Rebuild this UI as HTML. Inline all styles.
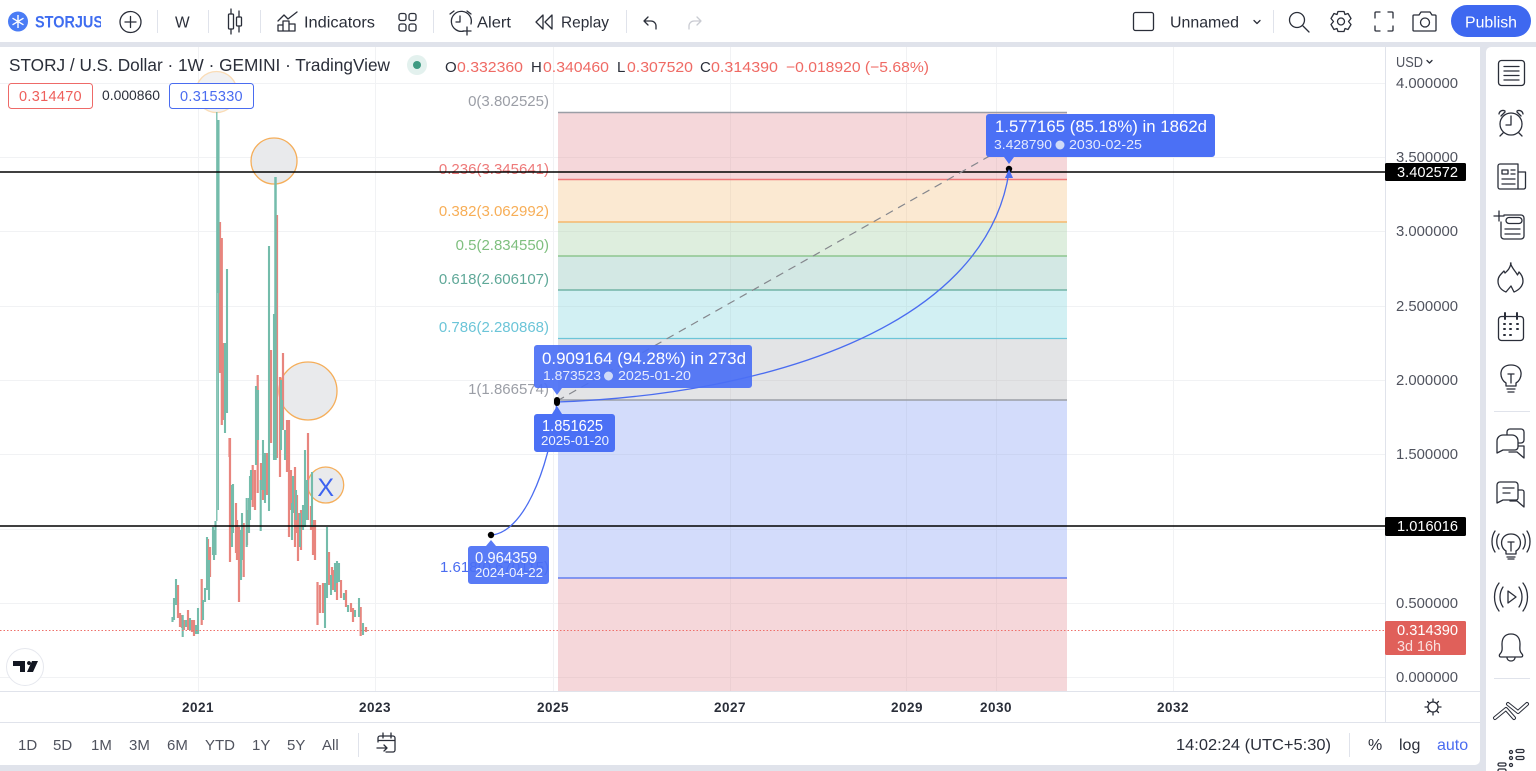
<!DOCTYPE html>
<html><head><meta charset="utf-8"><title>STORJ chart</title>
<style>
html,body{margin:0;padding:0;width:1536px;height:771px;overflow:hidden;background:#e0e3eb}
svg.root{display:block;position:absolute;left:0;top:0;filter:blur(.35px)}
text{font-family:"Liberation Sans",sans-serif;fill:#2a2e39}
.i{fill:none;stroke:#2a2e39;stroke-width:1.3;stroke-linecap:round;stroke-linejoin:round}
.ax{font-size:14.5px;fill:#50535e}
.fl{font-size:15px;text-anchor:end}
.t{font-size:16px}
.b{font-size:15px;fill:#50535e}
.y{font-size:13.5px;font-weight:bold;text-anchor:middle;letter-spacing:.5px}
.tt{fill:#fff}
</style></head><body>
<svg class="root" width="1536" height="771" viewBox="0 0 1536 771" xmlns="http://www.w3.org/2000/svg">
<!-- panes -->
<rect x="0" y="0" width="1536" height="42" fill="#fff"/>
<rect x="-6" y="47" width="1486" height="718" rx="5" fill="#fff"/>
<rect x="1486" y="47" width="60" height="730" rx="5" fill="#fff"/>
<!-- grid -->
<path d="M0 83.5H1385M0 157.5H1385M0 231.5H1385M0 306.5H1385M0 380.5H1385M0 454.5H1385M0 529.5H1385M0 603.5H1385M0 677.5H1385M198.5 47V691M375.5 47V691M553.5 47V691M730.5 47V691M906.5 47V691M996.5 47V691M1173.5 47V691" stroke="#f1f2f4" stroke-width="1" fill="none"/>
<!-- fib fills -->
<rect x="558" y="112" width="509" height="68" fill="#f5d7da"/>
<rect x="558" y="180" width="509" height="42" fill="#fbe9d2"/>
<rect x="558" y="222" width="509" height="34" fill="#deeede"/>
<rect x="558" y="256" width="509" height="34" fill="#d3e8e4"/>
<rect x="558" y="290" width="509" height="48" fill="#d2f0f3"/>
<rect x="558" y="338" width="509" height="62" fill="#e3e4e6"/>
<rect x="558" y="400" width="509" height="178" fill="#d3dcfb"/>
<rect x="558" y="578" width="509" height="113" fill="#f5d7da"/>
<path d="M730.500 112V691M906.500 112V691M996.500 112V691M558 157.500H1067M558 231.500H1067M558 306.500H1067M558 380.500H1067M558 454.500H1067M558 529.500H1067M558 603.500H1067M558 677.500H1067" stroke="#000" stroke-opacity=".035"/>
<path d="M558 112.500H1067" stroke="#9b9ea6" stroke-width="1.400"/>
<path d="M558 179.500H1067" stroke="#ee7a7a" stroke-width="1.500"/>
<path d="M558 222H1067" stroke="#f7ae57" stroke-width="1.300"/>
<path d="M558 256H1067" stroke="#7fbf7f" stroke-width="1.300"/>
<path d="M558 290H1067" stroke="#5fa898" stroke-width="1.300"/>
<path d="M558 338.500H1067" stroke="#6cc5d8" stroke-width="1.300"/>
<path d="M558 400H1067" stroke="#9b9ea6" stroke-width="1.400"/>
<path d="M558 578H1067" stroke="#4a6cf0" stroke-width="1.300"/>
<text class="fl" x="549" y="106" style="fill:#9b9ea6">0(3.802525)</text>
<text class="fl" x="549" y="174" style="fill:#ee7a7a">0.236(3.345641)</text>
<text class="fl" x="549" y="216" style="fill:#f7ae57">0.382(3.062992)</text>
<text class="fl" x="549" y="250" style="fill:#7fbf7f">0.5(2.834550)</text>
<text class="fl" x="549" y="284" style="fill:#5fa898">0.618(2.606107)</text>
<text class="fl" x="549" y="332" style="fill:#6cc5d8">0.786(2.280868)</text>
<text class="fl" x="549" y="394" style="fill:#9b9ea6">1(1.866574)</text>
<text class="fl" x="549" y="572" style="fill:#4a6cf0">1.618(0.670115)</text>
<!-- circles -->
<g fill="#e9eaec" stroke="#f5ae5a" stroke-width="1.300">
<circle cx="216.500" cy="92" r="20.500" fill="#f1f1f2" stroke="#fadcb6"/>
<circle cx="274" cy="161" r="23"/>
<circle cx="308" cy="391" r="29"/>
<circle cx="325.700" cy="485" r="18"/>
</g>
<text x="325.700" y="496" text-anchor="middle" style="font-size:25px;fill:#3d63f0">X</text>
<!-- candles -->
<path fill="none" stroke="#e8857e" stroke-width="2.200" d="M178 585V618M180 613V627M182 615V628M184 620V630M188 610V630M192 620V632M194 620V636M201.700 579V625M208 539V573M210 547V577M220 222V373M221.800 238V425M223.500 343V420M229.500 438V457M230 438V562M236 503V553M237 520V560M239 527V602M243.700 523V577M247 510V545M252.700 465V507M255 470V510M257.700 375V493M261 463V490M263 470V500M267 453V495M271 350V443M277 215V458M280 377V477M283 353V430M287 420V472M289 420V537M291 470V510M295 467V547M297 495V533M298 513V561M301 510V550M306 490V520M308 433V520M311 506V530M313 520V555M315 520V560M317.500 582V625M320 585V613M323 583V613M329 552V585M332 567V590M334 570V590M337 580V600M341 580V598M346 590V607M351 603V612M353 608V622M360.700 607V636M366 627V632"/>
<path fill="none" stroke="#74bcab" stroke-width="2.100" d="M172.500 617V622M174 598V620M176 579V605M182.700 615V637M186 620V627M190 618V630M196 625V634M198 608V634M203 600V620M205 588V602M207 537V590M209 560V600M213 527V555M214 530V560M215.500 521V555M225 343V433M227 269V413M232 485V547M233 484V533M241 530V580M242 513V560M246.700 498V547M249 498V533M250 476V520M251 470V500M256 386V465M258 390V440M260.700 480V531M263 440V490M265 453V503M269 246V511M274 314V460M281 380V450M282 400V430M285 430V460M292 503V540M293 476V513M296 490V520M300 513V547M303 505V530M305 450V527M307 480V520M312 472V527M325 583V628M327 527V598M331 575V595M335 563V592M337 561V583M339 563V582M344 593V600M348 605V612M355 610V617M359 598V617M363 623V635M368 630V631"/>
<path fill="none" stroke="#74bcab" stroke-width="1.300" d="M216.800 112V521M218.300 293V510"/>
<path fill="none" stroke="#74bcab" stroke-width="2.500" d="M218.300 120V293M275.500 177V460"/>
<!-- last price line -->
<path d="M0 630.500H1385" stroke="#ee6f6a" stroke-width="1" stroke-dasharray="1.500 2"/>
<!-- horizontal lines -->
<path d="M0 172H1385M0 526H1385" stroke="#000" stroke-width="1.400"/>
<!-- projection -->
<path d="M557 401L1009 145" stroke="#85878d" stroke-width="1.200" stroke-dasharray="8 6" fill="none"/>
<path d="M491 535C522 533 548 475 557 402" stroke="#4a6cf0" stroke-width="1.300" fill="none"/>
<path d="M557 402C760 395 985 330 1009 172" stroke="#4a6cf0" stroke-width="1.300" fill="none"/>
<circle cx="491" cy="535" r="3.200" fill="#000"/>
<rect x="554" y="397" width="6" height="9" rx="3" fill="#000"/>
<circle cx="1009" cy="169" r="3.200" fill="#000"/>
<path d="M1005 178L1009 169L1013 178Z" fill="#4a6cf0"/>
<!-- tooltips -->
<g fill="#4b70f5">
<path d="M537 345H749a3 3 0 0 1 3 3V385a3 3 0 0 1-3 3H562L557 395L552 388H537a3 3 0 0 1-3-3V348a3 3 0 0 1 3-3Z" fill-opacity=".92"/>
<path d="M537 414H552L557 406L562 414H612a3 3 0 0 1 3 3V449a3 3 0 0 1-3 3H537a3 3 0 0 1-3-3V417a3 3 0 0 1 3-3Z"/>
<path d="M471 546H486L491 540L496 546H546a3 3 0 0 1 3 3V581a3 3 0 0 1-3 3H471a3 3 0 0 1-3-3V549a3 3 0 0 1 3-3Z" fill-opacity=".92"/>
<path d="M989 114H1212a3 3 0 0 1 3 3V154a3 3 0 0 1-3 3H1014L1009 164L1004 157H989a3 3 0 0 1-3-3V117a3 3 0 0 1 3-3Z"/>
</g>
<text class="tt" x="542" y="364" textLength="204" lengthAdjust="spacingAndGlyphs" style="font-size:16.500px">0.909164 (94.28%) in 273d</text>
<text class="tt" x="543" y="380" textLength="58" lengthAdjust="spacingAndGlyphs" style="font-size:13px;fill-opacity:.85">1.873523</text>
<circle cx="608.500" cy="376" r="4.500" fill="#d0daf8"/>
<text class="tt" x="618" y="380" textLength="73" lengthAdjust="spacingAndGlyphs" style="font-size:13px;fill-opacity:.85">2025-01-20</text>
<text class="tt" x="542" y="431" textLength="61" lengthAdjust="spacingAndGlyphs" style="font-size:16px">1.851625</text>
<text class="tt" x="541" y="445" textLength="68" lengthAdjust="spacingAndGlyphs" style="font-size:13px;fill-opacity:.9">2025-01-20</text>
<text class="tt" x="475" y="563" textLength="62" lengthAdjust="spacingAndGlyphs" style="font-size:16px;fill-opacity:.95">0.964359</text>
<text class="tt" x="475" y="577" textLength="68" lengthAdjust="spacingAndGlyphs" style="font-size:13px;fill-opacity:.9">2024-04-22</text>
<text class="tt" x="995" y="132" textLength="212" lengthAdjust="spacingAndGlyphs" style="font-size:16.500px">1.577165 (85.18%) in 1862d</text>
<text class="tt" x="994" y="149" textLength="58" lengthAdjust="spacingAndGlyphs" style="font-size:13px;fill-opacity:.85">3.428790</text>
<circle cx="1060" cy="145" r="4.500" fill="#d0daf8"/>
<text class="tt" x="1069" y="149" textLength="73" lengthAdjust="spacingAndGlyphs" style="font-size:13px;fill-opacity:.85">2030-02-25</text>
<!-- legend -->
<text x="9" y="71" textLength="381" lengthAdjust="spacingAndGlyphs" style="font-size:17.500px">STORJ / U.S. Dollar · 1W · GEMINI · TradingView</text>
<circle cx="417" cy="65" r="10" fill="#e3f1ee"/><circle cx="417" cy="65" r="4" fill="#3f9a82"/>
<g style="font-size:15px">
<text x="445" y="72">O</text><text x="457" y="72" textLength="66" lengthAdjust="spacingAndGlyphs" style="fill:#ef6a64">0.332360</text>
<text x="531" y="72">H</text><text x="543" y="72" textLength="66" lengthAdjust="spacingAndGlyphs" style="fill:#ef6a64">0.340460</text>
<text x="617" y="72">L</text><text x="627" y="72" textLength="66" lengthAdjust="spacingAndGlyphs" style="fill:#ef6a64">0.307520</text>
<text x="700" y="72">C</text><text x="711" y="72" textLength="67" lengthAdjust="spacingAndGlyphs" style="fill:#ef6a64">0.314390</text>
<text x="786" y="72" textLength="143" lengthAdjust="spacingAndGlyphs" style="fill:#ef6a64">−0.018920 (−5.68%)</text>
</g>
<rect x="8.500" y="83.500" width="84" height="25" rx="3" fill="#fff" stroke="#ee6a68"/>
<text x="50.500" y="101" text-anchor="middle" style="font-size:14.500px;fill:#ee5f5b;letter-spacing:.3px">0.314470</text>
<text x="102" y="100" textLength="58" lengthAdjust="spacingAndGlyphs" style="font-size:13.500px">0.000860</text>
<rect x="169.500" y="83.500" width="84" height="25" rx="3" fill="#fff" stroke="#4a6cf0"/>
<text x="211.500" y="101" text-anchor="middle" style="font-size:14.500px;fill:#4a6cf0;letter-spacing:.3px">0.315330</text>
<!-- price axis -->
<rect x="1385" y="47" width="95" height="644" fill="#fff"/>
<path d="M1385.500 47V722M0 691.500H1480M0 722.500H1480" stroke="#e0e3eb"/>
<text x="1396" y="67" textLength="27" lengthAdjust="spacingAndGlyphs" style="font-size:14.500px;fill:#50535e">USD</text>
<path d="M1427 60.500l2.500 2.500 2.500-2.500" class="i"/>
<text class="ax" x="1396" y="88" textLength="62" lengthAdjust="spacingAndGlyphs">4.000000</text>
<text class="ax" x="1396" y="162" textLength="62" lengthAdjust="spacingAndGlyphs">3.500000</text>
<text class="ax" x="1396" y="236" textLength="62" lengthAdjust="spacingAndGlyphs">3.000000</text>
<text class="ax" x="1396" y="311" textLength="62" lengthAdjust="spacingAndGlyphs">2.500000</text>
<text class="ax" x="1396" y="385" textLength="62" lengthAdjust="spacingAndGlyphs">2.000000</text>
<text class="ax" x="1396" y="459" textLength="62" lengthAdjust="spacingAndGlyphs">1.500000</text>
<text class="ax" x="1396" y="608" textLength="62" lengthAdjust="spacingAndGlyphs">0.500000</text>
<text class="ax" x="1396" y="682" textLength="62" lengthAdjust="spacingAndGlyphs">0.000000</text>
<rect x="1385" y="163" width="81" height="18" rx="1.500" fill="#000"/>
<text x="1397" y="177" textLength="61" lengthAdjust="spacingAndGlyphs" style="font-size:14.500px;fill:#fff">3.402572</text>
<rect x="1385" y="517" width="81" height="19" rx="1.500" fill="#000"/>
<text x="1397" y="531" textLength="61" lengthAdjust="spacingAndGlyphs" style="font-size:14.500px;fill:#fff">1.016016</text>
<rect x="1385" y="621" width="81" height="34" rx="1.500" fill="#e0605a"/>
<text x="1397" y="635" textLength="61" lengthAdjust="spacingAndGlyphs" style="font-size:14.500px;fill:#fff">0.314390</text>
<text x="1397" y="651" textLength="44" lengthAdjust="spacingAndGlyphs" style="font-size:14.500px;fill:#fff;fill-opacity:.8">3d 16h</text>
<!-- axis gear -->
<g class="i"><circle cx="1433" cy="707" r="5"/><path d="M1433 699v3M1433 712v3M1425 707h3M1438 707h3M1427.500 701.500l2 2M1436.500 710.500l2 2M1427.500 712.500l2-2M1436.500 703.500l2-2"/></g>
<!-- time axis -->
<text class="y" x="198" y="712">2021</text><text class="y" x="375" y="712">2023</text><text class="y" x="553" y="712">2025</text><text class="y" x="730" y="712">2027</text><text class="y" x="907" y="712">2029</text><text class="y" x="996" y="712">2030</text><text class="y" x="1173" y="712">2032</text>
<!-- TV logo -->
<circle cx="25" cy="667" r="18.500" fill="#fff" stroke="#e6e8ee"/>
<path d="M13 661H25V672H20V666H13ZM27 663a2 2 0 1 1 0 .1ZM32 661H38L33 672H27Z" fill="#131722"/>
<!-- bottom bar -->
<text class="b" x="18" y="750">1D</text><text class="b" x="53" y="750">5D</text><text class="b" x="91" y="750">1M</text><text class="b" x="129" y="750">3M</text><text class="b" x="167" y="750">6M</text><text class="b" x="205" y="750">YTD</text><text class="b" x="252" y="750">1Y</text><text class="b" x="287" y="750">5Y</text><text class="b" x="322" y="750">All</text>
<path d="M358.500 733V757M1349.500 733V757" stroke="#e0e3eb"/>
<g class="i"><path d="M378 742V738a2 2 0 0 1 2-2h13a2 2 0 0 1 2 2v12a2 2 0 0 1-2 2h-7M378 740.500h17M383 733v5M391 733v5M377 748h10M384 745l3 3-3 3"/></g>
<text x="1176" y="750" textLength="155" lengthAdjust="spacingAndGlyphs" style="font-size:16px">14:02:24 (UTC+5:30)</text>
<text x="1368" y="750" style="font-size:16px">%</text>
<text x="1399" y="750" style="font-size:16px">log</text>
<text x="1437" y="750" style="font-size:16px;fill:#4a6cf0">auto</text>
<!-- top toolbar -->
<circle cx="18" cy="21.500" r="10" fill="#4a7cf5"/>
<path d="M18 15v13M12.500 18.200l11 6.600M12.500 24.800l11-6.600" stroke="#fff" stroke-width="1.400"/>
<svg x="35" y="8" width="66" height="28" viewBox="0 0 66 28"><text x="0" y="19.500" textLength="68" lengthAdjust="spacingAndGlyphs" style="font-size:17px;font-weight:bold;fill:#3f6df0">STORJUS</text></svg>
<g class="i"><circle cx="130.500" cy="22" r="10.500"/><path d="M130.500 16.500v11M125 22h11"/></g>
<path d="M157.500 10V33M208.500 10V33M260.500 10V33M433.500 10V33M626.500 10V33M1273.500 10V33" stroke="#e0e3eb"/>
<text x="175" y="27.500" style="font-size:15.500px">W</text>
<g class="i"><rect x="228.500" y="14" width="5" height="15" rx="1"/><path d="M231 9v5M231 29v5M239 11v6M239 26v6"/><rect x="236.500" y="17" width="5" height="9" rx="1"/></g>
<g class="i"><path d="M278 31V25h5v6ZM283 31V21h6v10ZM289 31V24h6v7ZM278 31h17"/><path d="M278 21l6-6 4 4 9-7"/></g>
<text class="t" x="304" y="27.500" textLength="71" lengthAdjust="spacingAndGlyphs">Indicators</text>
<g class="i"><rect x="399" y="13.500" width="7" height="7" rx="2"/><rect x="409" y="13.500" width="7" height="7" rx="2"/><rect x="399" y="24" width="7" height="7" rx="2"/><rect x="409" y="24" width="7" height="7" rx="2"/></g>
<g class="i"><path d="M464 31a10 10 0 1 1 7-7"/><path d="M450 14l4-3M467 11l4 3M460 16v6h-4M467 27v8M463 31h8"/></g>
<text class="t" x="477" y="27.500" textLength="34" lengthAdjust="spacingAndGlyphs">Alert</text>
<g class="i"><path d="M543 15l-7 7 7 7ZM552 15l-7 7 7 7Z"/></g>
<text class="t" x="561" y="27.500" textLength="48" lengthAdjust="spacingAndGlyphs">Replay</text>
<g class="i"><path d="M648 17l-4 4 4 4M644 21h7a5 5 0 0 1 5 5v3"/></g>
<g class="i" style="stroke:#c9cbd2"><path d="M697 17l4 4-4 4M701 21h-7a5 5 0 0 0-5 5v3"/></g>
<g class="i"><rect x="1133.500" y="12.500" width="20" height="18" rx="2"/><path d="M1254 20.500l3 3 3-3"/></g>
<text class="t" x="1170" y="27.500" textLength="69" lengthAdjust="spacingAndGlyphs">Unnamed</text>
<g class="i"><circle cx="1297" cy="20" r="7.500"/><path d="M1303 26l6 6"/></g>
<g class="i"><circle cx="1341" cy="21.500" r="3.500"/><path d="M1338 11.500h6l1 3 3-1 3 5-2.500 3 2.500 3-3 5-3-1-1 3h-6l-1-3-3 1-3-5 2.500-3-2.500-3 3-5 3 1Z"/></g>
<g class="i"><path d="M1375 18v-5a1 1 0 0 1 1-1h4M1388 12h4a1 1 0 0 1 1 1v5M1393 26v4a1 1 0 0 1-1 1h-4M1380 31h-4a1 1 0 0 1-1-1v-4"/></g>
<g class="i"><path d="M1414 15h5l2-3h9l2 3h3a1 1 0 0 1 1 1v14a1 1 0 0 1-1 1h-21a1 1 0 0 1-1-1V16a1 1 0 0 1 1-1Z"/><circle cx="1425" cy="22.500" r="4.500"/></g>
<rect x="1451" y="5" width="80" height="32" rx="16" fill="#3e68f0"/>
<text x="1465" y="27.500" textLength="52" lengthAdjust="spacingAndGlyphs" style="font-size:16px;fill:#fff">Publish</text>
<!-- right toolbar icons -->
<path d="M1494 411.500H1530M1494 678.500H1530" stroke="#e0e3eb"/>
<g class="i">
<rect x="1498.500" y="60.500" width="26" height="25" rx="3"/><path d="M1504 66.500h15M1504 71h15M1504 75.500h15M1504 80h15"/>
<circle cx="1511" cy="124" r="11"/><path d="M1511 116v9h-5M1501 116l4-4M1521 116l-4-4M1503 133l-3 3M1519 133l3 3M1499 114a4 4 0 0 1 6-3M1523 114a4 4 0 0 0-6-3"/>
<path d="M1518 164h-18a2 2 0 0 0-2 2v21a2 2 0 0 0 2 2h24a2 2 0 0 0 1.500-2V172h-7.500M1518 164v25"/><rect x="1502" y="170" width="6" height="4"/><path d="M1511 170h4M1511 174h4M1502 179h13M1502 184h13"/>
<path d="M1504 215h17a3 3 0 0 1 3 3v18a3 3 0 0 1-3 3h-17a3 3 0 0 1-3-3V222"/><rect x="1506" y="217.500" width="16" height="6" rx="3"/><path d="M1505 229h15M1505 234h15M1499 211v10M1494 216h10"/>
<path d="M1511 263c-1 6-4 8-6 10l-1-2c-4 4-6 6-6 10 0 5 3 9 8 11l5-6 3 6c5-2 9-6 9-11 0-4-2-7-4-9l-1.500 3c-2-4-6-7-7-12Z"/>
<rect x="1498.500" y="316.500" width="25" height="24" rx="3"/><path d="M1505 313v6M1517 313v6M1504 324h1M1510 324h1M1517 324h1M1504 329h1M1510 329h1M1517 329h1M1504 335h1M1510 335h1" stroke-width="2"/>
<path d="M1506 383c-7-4-8-18 5-18s12 14 5 18v3h-10ZM1507 389h8M1508 392h6M1508 374h6M1511 374v9"/>
<path d="M1497 453V441a6 6 0 0 1 6-6h9a6 6 0 0 1 6 6v6a3 3 0 0 1-3 3H1503ZM1507 435v-3a3 3 0 0 1 3-3h11a3 3 0 0 1 3 3v8a3 3 0 0 1-3 3h-3M1518 446h6v12l-7-6h-8"/>
<path d="M1497 503V485a3 3 0 0 1 3-3h15a3 3 0 0 1 3 3v13a2 2 0 0 1-2 2H1503ZM1503 488h11M1503 493h7M1518 490h4a2 2 0 0 1 2 2v15l-7-6h-7v-1"/>
<path d="M1506 551c-7-4-6-17 5-17s12 13 5 17v3h-10ZM1507 557h8M1508 559h6M1508 542h6M1511 542v9M1499 534c-3 4-3 11 0 15M1495 531c-4 6-4 15 0 21M1523 534c3 4 3 11 0 15M1527 531c4 6 4 15 0 21"/>
<path d="M1508 591l8 6-8 6ZM1503 587c-4 6-4 14 0 20M1499 583c-6 8-6 20 0 28M1519 587c4 6 4 14 0 20M1523 583c6 8 6 20 0 28"/>
<path d="M1500 654c3-3 2-6 2-10 0-6 3-10 9-10s9 4 9 10c0 4-1 7 2 10 1 1 1 3-1 3h-20c-2 0-2-2-1-3ZM1507 658c1 4 7 4 8 0"/>
</g>
<path d="M1495 718l11-9 8 9M1508 704l10 8 9-8" fill="none" stroke="#2a2e39" stroke-width="4" stroke-linecap="round" stroke-linejoin="round"/>
<path d="M1495 718l11-9 8 9M1508 704l10 8 9-8" fill="none" stroke="#fff" stroke-width="2" stroke-linecap="round" stroke-linejoin="round"/>
<g class="i">
<circle cx="1511" cy="752" r="1.500"/><circle cx="1511" cy="758" r="1.500"/><rect x="1516" y="749.500" width="8" height="3" rx="1.500"/><rect x="1516" y="756.500" width="8" height="3" rx="1.500"/><circle cx="1511" cy="765" r="1.500"/><rect x="1498" y="763" width="8" height="3" rx="1.500"/><rect x="1498" y="769" width="8" height="3" rx="1.500"/>
</g>
</svg>
</body></html>
